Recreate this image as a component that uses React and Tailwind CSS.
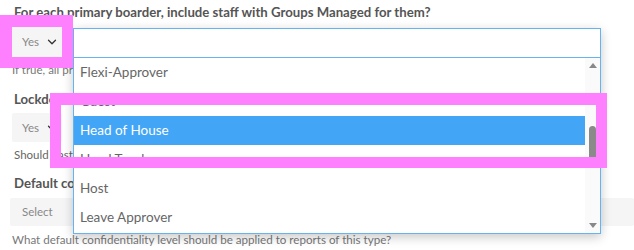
import { ChevronDown } from "lucide-react";

const options = ["Flexi-Approver", "Guest", "Head of House", "Head Teacher", "Host", "Leave Approver"];

function YesSelect({ h }) {
  return (
    <div className={`flex ${h} w-[50px] items-center gap-[6px] rounded-[2px] bg-[#f5f5f5] pl-[10px]`}>
      <span className="text-[11.5px] text-[#888]">Yes</span>
      <ChevronDown className="h-[14px] w-[14px] text-[#333]" strokeWidth={2.2} />
    </div>
  );
}

export default function App() {
  return (
    <div className="relative h-[250px] w-[634px] overflow-hidden bg-white font-['Lato',sans-serif]">
      <div className="flex flex-col pl-[12px] pt-[2px]">
        <p className="pl-[2px] text-[13.2px] font-bold leading-[20px] text-[#555]">
          For each primary boarder, include staff with Groups Managed for them?
        </p>
        <div className="mt-[5px]">
          <YesSelect h="h-[30px]" />
        </div>
        <p className="mt-[5px] text-[11.5px] leading-[16px] text-[#777]">
          If true, all primary boarders will also be visible to their group managers.
        </p>
        <p className="mt-[11px] pl-[2px] text-[13.2px] font-bold leading-[20px] text-[#555]">Lockdown notifications</p>
        <div className="mt-[4px]">
          <YesSelect h="h-[29px]" />
        </div>
        <p className="mt-[5px] pl-[2px] text-[11.5px] leading-[16px] text-[#666]">Should pastoral staff be notified?</p>
        <p className="mt-[10px] pl-[2px] text-[13.2px] font-bold leading-[20px] text-[#555]">Default confidentiality</p>
        <div className="-ml-[2px] mt-[5px] flex h-[28px] items-center rounded-[2px] bg-[#f5f5f5] pl-[12px]">
          <span className="text-[11.5px] text-[#888]">Select</span>
        </div>
        <p className="mt-[6px] text-[11.6px] leading-[16px] text-[#777]">
          What default confidentiality level should be applied to reports of this type?
        </p>
      </div>

      <div className="absolute left-[73px] top-[28px] w-[528px] bg-white shadow-[0_3px_10px_rgba(0,0,0,0.22)]">
        <div className="h-[30px] border border-[#66b3ee]" />
        <div className="flex h-[176px] border border-t-0 border-[#66b3ee]">
          <div className="flex flex-1 flex-col">
            {options.map((o) => (
              <div
                key={o}
                className={`flex h-[29px] shrink-0 items-center pl-[6px] text-[13.5px] ${
                  o === "Head of House" ? "bg-[#42a5f5] text-white" : "text-[#666]"
                }`}
              >
                {o}
              </div>
            ))}
          </div>
          <div className="flex w-[15px] flex-col items-center bg-[#fafafa] pt-[5px]">
            <svg width="8" height="5" viewBox="0 0 8 5">
              <path d="M0 5L4 0L8 5Z" fill="#888" />
            </svg>
            <div className="mt-[58px] h-[40px] w-[7px] rounded-[4px] bg-[#8a8a8a]" />
            <div className="flex-1" />
            <svg width="8" height="5" viewBox="0 0 8 5" className="mb-[5px]">
              <path d="M0 0L8 0L4 5Z" fill="#888" />
            </svg>
          </div>
        </div>
      </div>

      <div className="absolute left-0 top-[15px] h-[53px] w-[73px] border-[12px] border-[#ff80ff] border-r-[11px] border-b-[11px]" />
      <div className="absolute left-[50px] top-[93px] h-[75px] w-[557px] border-[11px] border-[#ff80ff] border-t-[12px]" />
    </div>
  );
}
